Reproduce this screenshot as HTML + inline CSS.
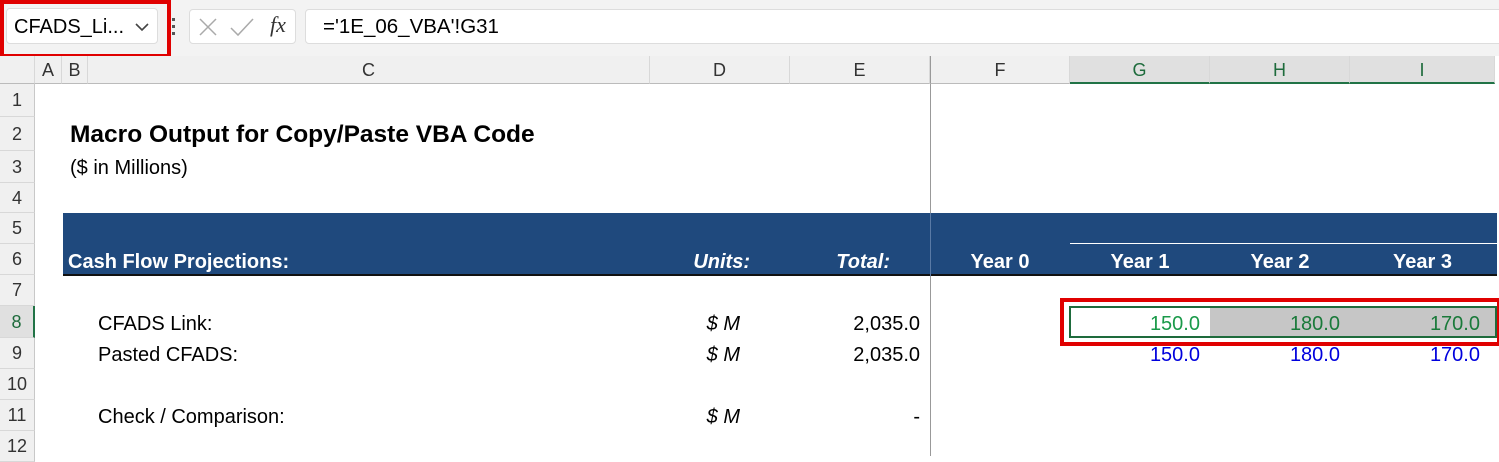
<!DOCTYPE html><html><head><style>
body{margin:0;width:1499px;height:456px;overflow:hidden;background:#fff;font-family:"Liberation Sans",Arial,sans-serif;position:relative}
div{position:absolute;box-sizing:border-box}
.t{white-space:nowrap;font-size:20px;line-height:20px}
.rh{left:0;width:35px;text-align:center;color:#333;font-size:18px;background:#f0f0f0;border-bottom:1px solid #d8d8d8;border-right:1px solid #c8c8c8}
.ch{top:56px;height:28px;text-align:center;font-size:18px;line-height:28px;color:#333;border-right:1px solid #d8d8d8;background:#f0f0f0;border-bottom:1px solid #bbb}
.r{text-align:right}
</style></head><body>
<div style="left:0;top:0;width:1499px;height:56px;background:#f3f3f3"></div>
<div style="left:6px;top:8px;width:152px;height:36px;background:#fff;border:1px solid #ddd;border-radius:4px"></div>
<div class="t" style="left:14px;top:17px">CFADS_Li...</div>
<svg style="position:absolute;left:134px;top:22px" width="16" height="10"><path d="M2 2 L8 8 L14 2" stroke="#444" stroke-width="1.6" fill="none"/></svg>
<div style="left:0;top:0;width:171px;height:58px;border:4px solid #e00000"></div>
<div style="left:172px;top:18px;width:3px;height:3px;background:#555"></div>
<div style="left:172px;top:25px;width:3px;height:3px;background:#555"></div>
<div style="left:172px;top:32px;width:3px;height:3px;background:#555"></div>
<div style="left:189px;top:9px;width:107px;height:35px;background:#fff;border:1px solid #ddd;border-radius:4px"></div>
<svg style="position:absolute;left:198px;top:17px" width="20" height="20"><path d="M2 2L18 18M18 2L2 18" stroke="#aaa" stroke-width="1.5"/></svg>
<svg style="position:absolute;left:229px;top:17px" width="26" height="20"><path d="M2 11L9 18L24 2" stroke="#aaa" stroke-width="1.5" fill="none"/></svg>
<div class="t" style="left:270px;top:15px;font-family:'Liberation Serif',serif;font-style:italic;font-size:22px;color:#333">fx</div>
<div style="left:305px;top:9px;width:1200px;height:35px;background:#fff;border:1px solid #ddd;border-radius:4px"></div>
<div class="t" style="left:323px;top:17px;font-size:20.5px">='1E_06_VBA'!G31</div>

<div class="ch" style="left:0;width:35px"></div>
<div class="ch" style="left:35px;width:27px">A</div>
<div class="ch" style="left:62px;width:26px">B</div>
<div class="ch" style="left:88px;width:562px">C</div>
<div class="ch" style="left:650px;width:140px">D</div>
<div class="ch" style="left:790px;width:140px">E</div>
<div class="ch" style="left:930px;width:140px;border-left:1px solid #999">F</div>
<div class="ch" style="left:1070px;width:140px;background:#e0e0e0;color:#1e6b3c;border-bottom:2px solid #217346">G</div>
<div class="ch" style="left:1210px;width:140px;background:#e0e0e0;color:#1e6b3c;border-bottom:2px solid #217346">H</div>
<div class="ch" style="left:1350px;width:145px;background:#e0e0e0;color:#1e6b3c;border-bottom:2px solid #217346">I</div>

<div class="rh" style="top:84px;height:33px;line-height:33px">1</div>
<div class="rh" style="top:117px;height:34px;line-height:34px">2</div>
<div class="rh" style="top:151px;height:32px;line-height:32px">3</div>
<div class="rh" style="top:183px;height:30px;line-height:30px">4</div>
<div class="rh" style="top:213px;height:31px;line-height:31px">5</div>
<div class="rh" style="top:244px;height:31px;line-height:31px">6</div>
<div class="rh" style="top:275px;height:31px;line-height:31px">7</div>
<div class="rh" style="top:306px;height:32px;line-height:32px;background:#e0e0e0;color:#1e6b3c;border-right:2px solid #217346">8</div>
<div class="rh" style="top:338px;height:31px;line-height:31px">9</div>
<div class="rh" style="top:369px;height:31px;line-height:31px">10</div>
<div class="rh" style="top:400px;height:31px;line-height:31px">11</div>
<div class="rh" style="top:431px;height:31px;line-height:31px">12</div>

<div style="left:930px;top:84px;width:1px;height:372px;background:#999"></div>
<div class="t" style="left:70px;top:123px;font-weight:bold;font-size:24.5px;line-height:24px">Macro Output for Copy/Paste VBA Code</div>
<div class="t" style="left:70px;top:158px">($ in Millions)</div>

<div style="left:63px;top:213px;width:1434px;height:63px;background:#1f497d;border-bottom:2px solid #111"></div>
<div style="left:930px;top:213px;width:1px;height:63px;background:#5a7aa5"></div>
<div style="left:1070px;top:243px;width:427px;height:1px;background:#fff"></div>
<div class="t" style="left:68px;top:252px;color:#fff;font-weight:bold">Cash Flow Projections:</div>
<div class="t r" style="left:650px;width:100px;top:252px;color:#fff;font-weight:bold;font-style:italic">Units:</div>
<div class="t r" style="left:790px;width:100px;top:252px;color:#fff;font-weight:bold;font-style:italic">Total:</div>
<div class="t" style="left:930px;width:140px;text-align:center;top:252px;color:#fff;font-weight:bold">Year 0</div>
<div class="t" style="left:1070px;width:140px;text-align:center;top:252px;color:#fff;font-weight:bold">Year 1</div>
<div class="t" style="left:1210px;width:140px;text-align:center;top:252px;color:#fff;font-weight:bold">Year 2</div>
<div class="t" style="left:1350px;width:145px;text-align:center;top:252px;color:#fff;font-weight:bold">Year 3</div>

<div class="t" style="left:98px;top:314px">CFADS Link:</div>
<div class="t" style="left:98px;top:345px">Pasted CFADS:</div>
<div class="t" style="left:98px;top:407px">Check / Comparison:</div>
<div class="t r" style="left:650px;width:90px;top:314px;font-style:italic">$ M</div>
<div class="t r" style="left:650px;width:90px;top:345px;font-style:italic">$ M</div>
<div class="t r" style="left:650px;width:90px;top:407px;font-style:italic">$ M</div>
<div class="t r" style="left:790px;width:130px;top:314px">2,035.0</div>
<div class="t r" style="left:790px;width:130px;top:345px">2,035.0</div>
<div class="t r" style="left:790px;width:130px;top:407px">-</div>

<div style="left:1210px;top:307px;width:287px;height:30px;background:#c6c6c6"></div>
<div style="left:1069px;top:306px;width:428px;height:32px;border:2px solid #1e6b3c"></div>
<div style="left:1060px;top:298px;width:441px;height:48px;border:4px solid #e00000"></div>
<div class="t r" style="left:1070px;width:130px;top:314px;color:#1a9a4a">150.0</div>
<div class="t r" style="left:1210px;width:130px;top:314px;color:#1a7a3a">180.0</div>
<div class="t r" style="left:1350px;width:130px;top:314px;color:#1a7a3a">170.0</div>
<div class="t r" style="left:1070px;width:130px;top:345px;color:#0000dd">150.0</div>
<div class="t r" style="left:1210px;width:130px;top:345px;color:#0000dd">180.0</div>
<div class="t r" style="left:1350px;width:130px;top:345px;color:#0000dd">170.0</div>
</body></html>
